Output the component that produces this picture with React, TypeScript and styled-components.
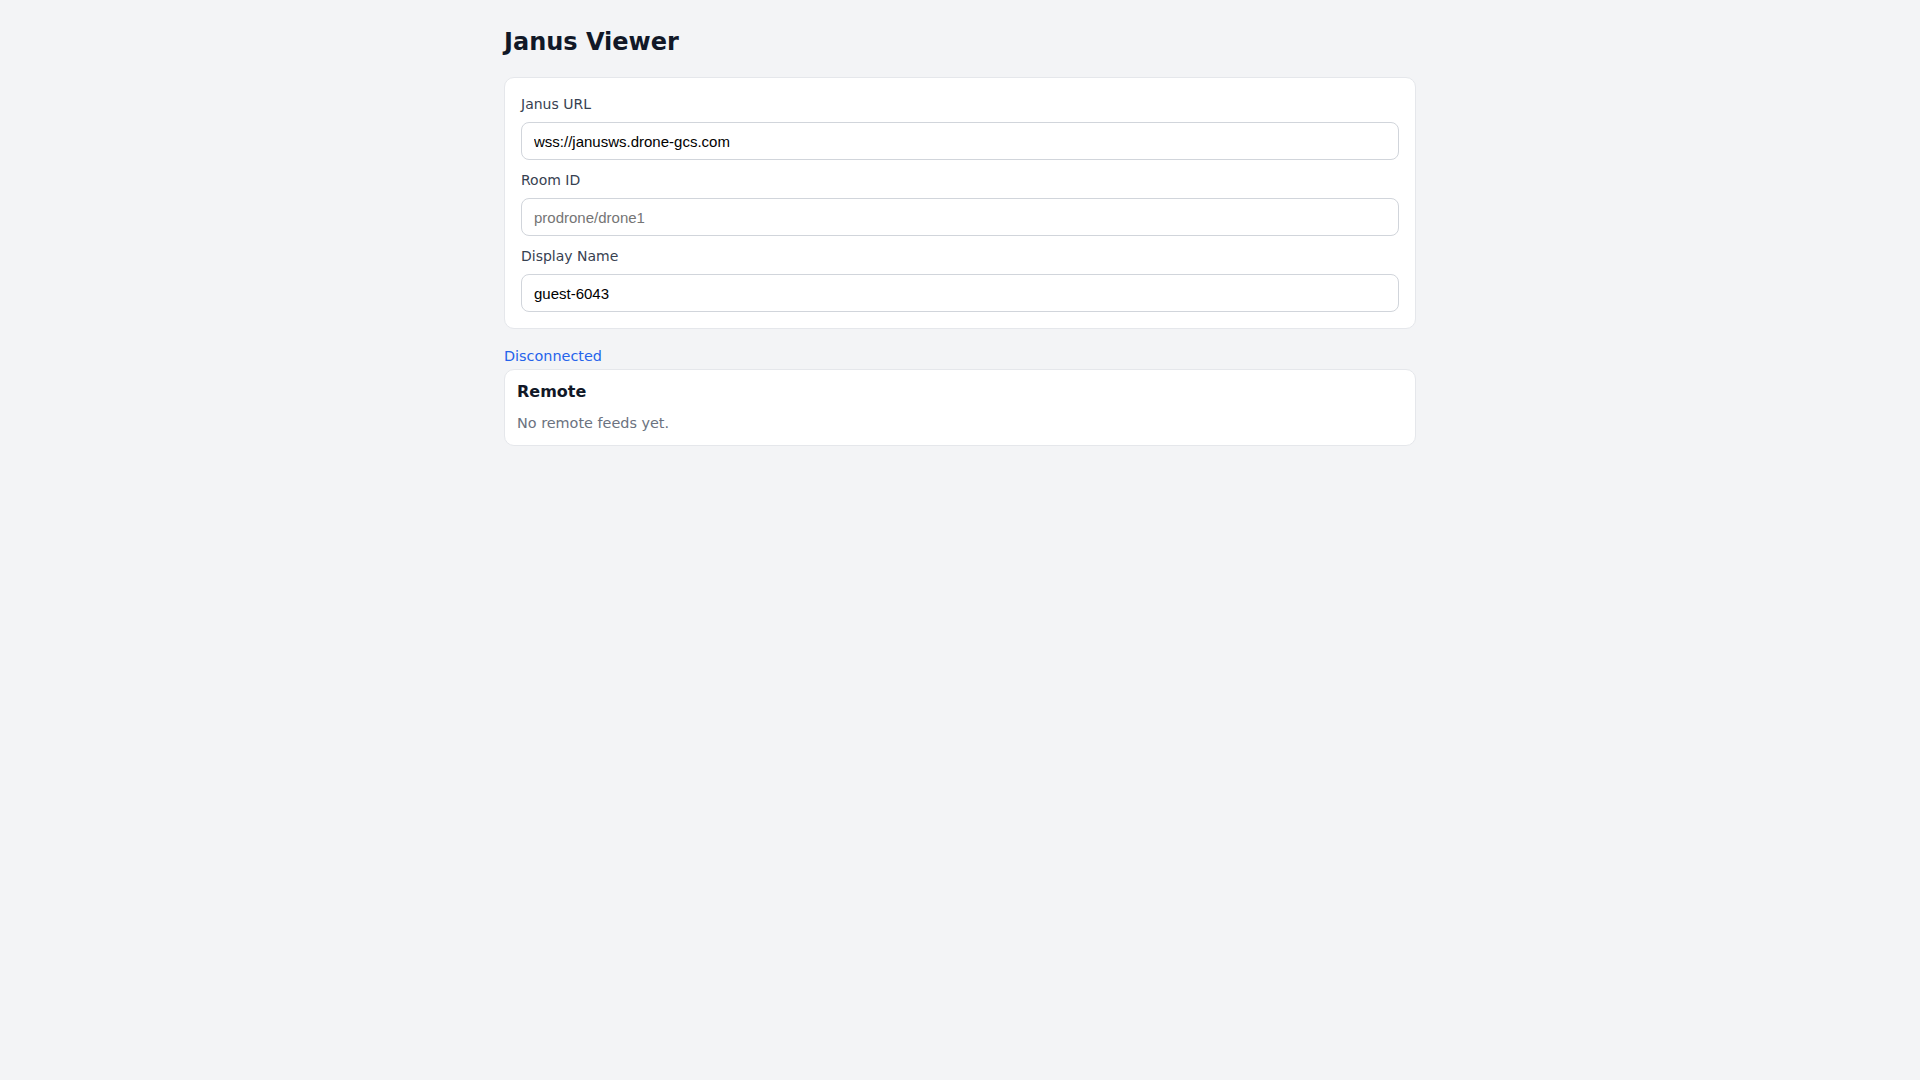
import styled, { createGlobalStyle } from "styled-components"

const GlobalStyle = createGlobalStyle`
  html, body {
    margin: 0;
    padding: 0;
    background: #f3f4f6;
    font-family: "DejaVu Sans", system-ui, sans-serif;
  }
  * {
    box-sizing: border-box;
  }
`

const Page = styled.main`
  width: 912px;
  margin: 0 auto;
  padding-top: 28px;
`

const Title = styled.h1`
  margin: 0 0 21px;
  font-size: 24px;
  line-height: 28px;
  font-weight: 700;
  color: #111827;
`

const Card = styled.section<{ $pad?: number }>`
  background: #ffffff;
  border: 1px solid #e5e7eb;
  border-radius: 10px;
  padding: ${(p) => p.$pad ?? 16}px;
`

const Form = styled.div`
  display: flex;
  flex-direction: column;
  gap: 10px;
`

const Field = styled.label`
  display: flex;
  flex-direction: column;
  gap: 8px;
`

const Label = styled.span`
  font-size: 14px;
  line-height: 20px;
  color: #374151;
`

const Input = styled.input`
  height: 38px;
  width: 100%;
  padding: 0 12px;
  border: 1px solid #d1d5db;
  border-radius: 8px;
  background: #fff;
  font-family: "Liberation Sans", Arial, sans-serif;
  font-size: 15px;
  color: #000;
  outline: none;
  &::placeholder {
    color: #757575;
  }
`

const Status = styled.div`
  margin: 17px 0 3px;
  font-size: 14.4px;
  line-height: 20px;
  color: #2563eb;
`

const SectionTitle = styled.h2`
  margin: 0 0 12px;
  font-size: 16px;
  line-height: 19px;
  font-weight: 700;
  color: #111827;
`

const Muted = styled.p`
  margin: 0;
  font-size: 14.4px;
  line-height: 20px;
  color: #6b7280;
`

export default function App() {
  return (
    <>
      <GlobalStyle />
      <Page>
        <Title>Janus Viewer</Title>
        <Card>
          <Form>
            <Field>
              <Label>Janus URL</Label>
              <Input defaultValue="wss://janusws.drone-gcs.com" />
            </Field>
            <Field>
              <Label>Room ID</Label>
              <Input placeholder="prodrone/drone1" />
            </Field>
            <Field>
              <Label>Display Name</Label>
              <Input defaultValue="guest-6043" />
            </Field>
          </Form>
        </Card>
        <Status>Disconnected</Status>
        <Card $pad={12}>
          <SectionTitle>Remote</SectionTitle>
          <Muted>No remote feeds yet.</Muted>
        </Card>
      </Page>
    </>
  )
}
